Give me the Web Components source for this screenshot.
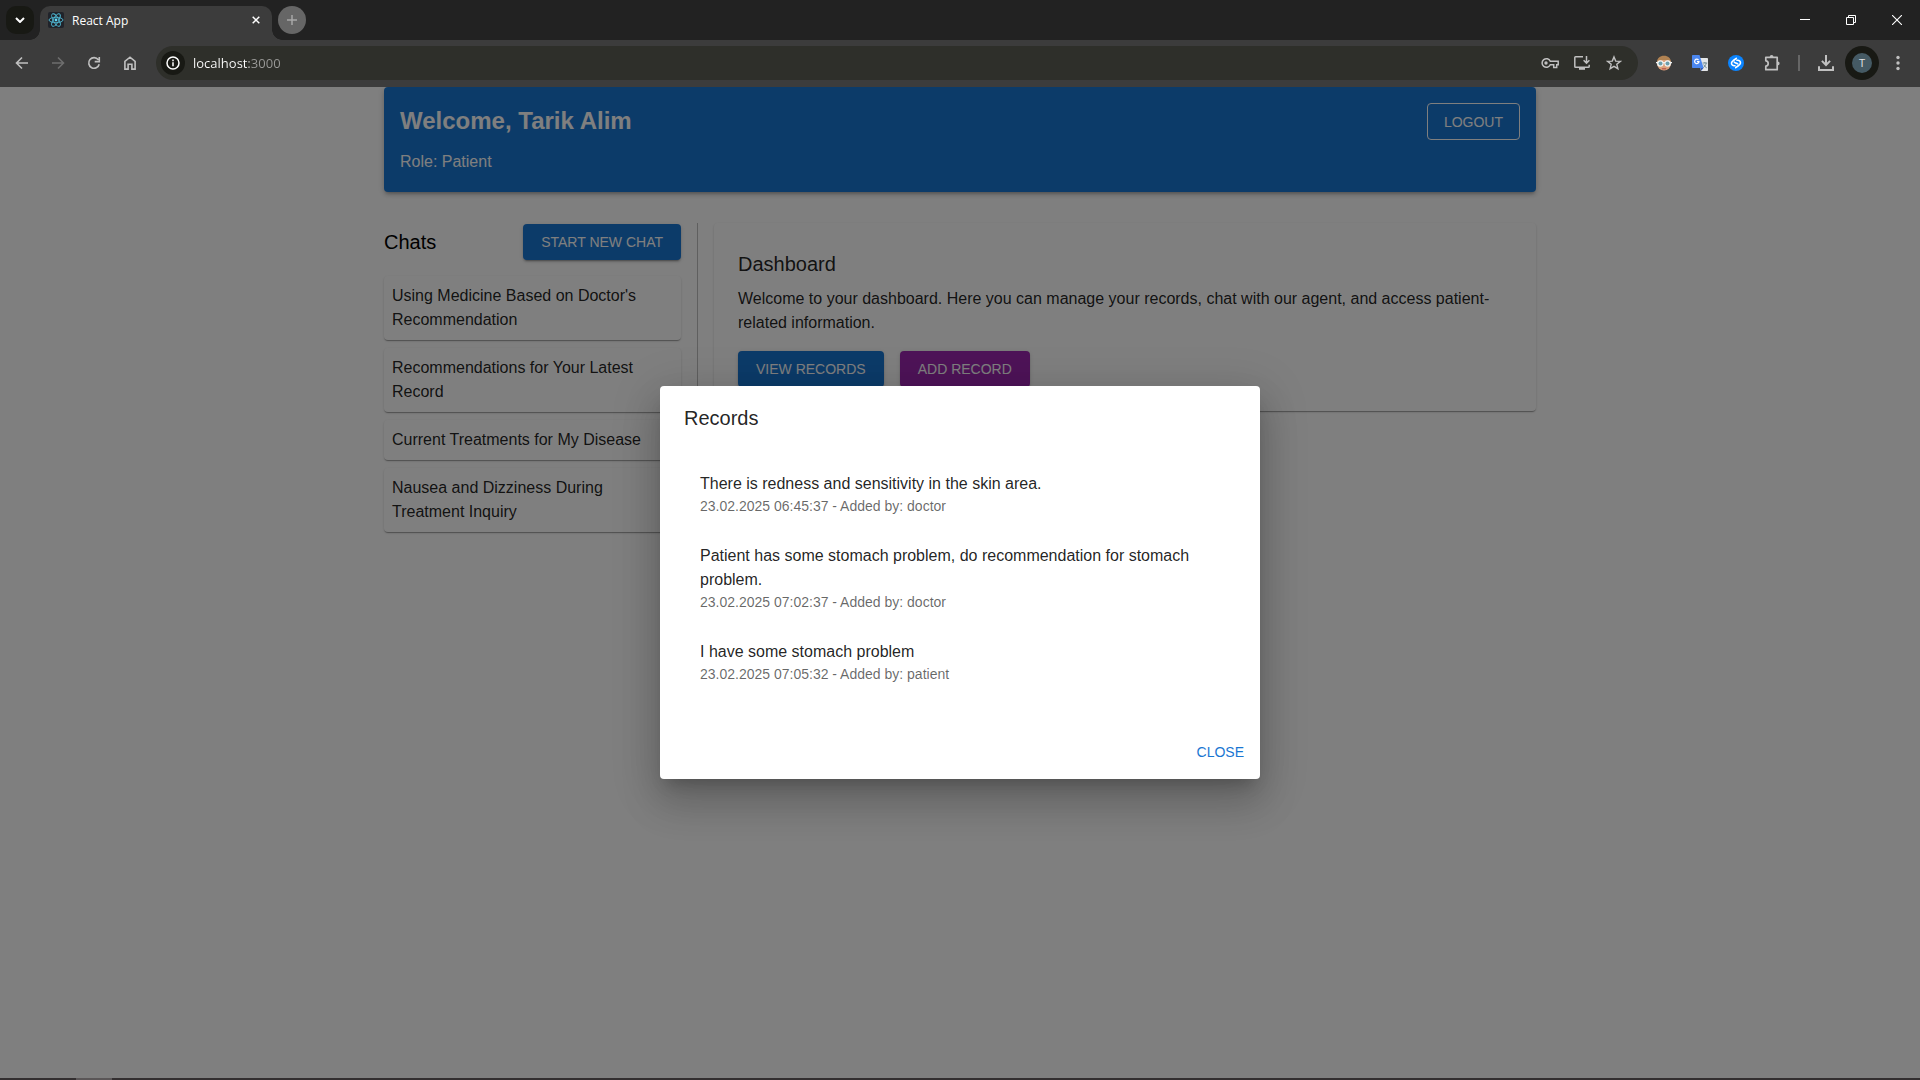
<!DOCTYPE html>
<html lang="en">
<head>
<meta charset="utf-8">
<title>React App</title>
<style>
  html, body { margin: 0; height: 100%; }
  body { font-family: "Liberation Sans", Arial, sans-serif; font-size: 16px; line-height: 24px; color: #000; background: #fff; }
</style>
</head>
<body>
<browser-window>
  <browser-tabs slot="chrome"></browser-tabs>
  <browser-toolbar slot="chrome"></browser-toolbar>
  <patient-page>
    <welcome-header slot="header" name="Tarik Alim" role-name="Patient"></welcome-header>
    <chat-list slot="side">
      <chat-item>Using Medicine Based on Doctor's Recommendation</chat-item>
      <chat-item>Recommendations for Your Latest Record</chat-item>
      <chat-item>Current Treatments for My Disease</chat-item>
      <chat-item>Nausea and Dizziness During Treatment Inquiry</chat-item>
    </chat-list>
    <dashboard-card>Welcome to your dashboard. Here you can manage your records, chat with our agent, and access patient-related information.</dashboard-card>
  </patient-page>
  <records-dialog slot="overlay">
    <record-item><span>There is redness and sensitivity in the skin area.</span><span slot="meta">23.02.2025 06:45:37 - Added by: doctor</span></record-item>
    <record-item><span>Patient has some stomach problem, do recommendation for stomach problem.</span><span slot="meta">23.02.2025 07:02:37 - Added by: doctor</span></record-item>
    <record-item><span>I have some stomach problem</span><span slot="meta">23.02.2025 07:05:32 - Added by: patient</span></record-item>
  </records-dialog>
</browser-window>

<script>
const define = (name, html) => customElements.define(name, class extends HTMLElement {
  constructor() {
    super();
    this.attachShadow({ mode: "open" }).innerHTML =
      html.replace(/\{([\w-]+)\}/g, (m, attr) => this.getAttribute(attr) || "");
  }
});

/* ---------- browser frame ---------- */
define("browser-window", `
<style>
  :host { display: flex; flex-direction: column; height: 100vh; overflow: hidden; }
  .view { flex: 1; position: relative; min-height: 0; overflow: hidden; background: #fff; }
  .task { display: flex; height: 2px; background: #332f30; padding-left: 76px; }
  .task i { width: 36px; background: #5a5657; }
</style>
<slot name="chrome"></slot>
<div class="view"><slot></slot><slot name="overlay"></slot></div>
<div class="task"><i></i></div>`);

define("browser-tabs", `
<style>
  :host { display: flex; height: 40px; background: #222; font-family: "Open Sans", "Noto Sans", sans-serif; font-size: 12px; }
  button { border: 0; padding: 0; margin: 0; background: none; color: #fff; display: grid; place-items: center; }
  svg { display: block; }
  .search { width: 28px; height: 28px; margin: 6px; border-radius: 10px; background: #181914; }
  .tab { display: flex; align-items: center; box-sizing: border-box; width: 232px; height: 34px; margin-top: 6px; padding: 0 8px 6px 8px; gap: 8px; background: #3c3c3c; border-radius: 10px 10px 0 0; color: #fff; position: relative; }
  .tab::before, .tab::after { content: ""; position: absolute; bottom: 0; width: 10px; height: 10px; }
  .tab::before { right: 100%; background: radial-gradient(circle at 0 0, transparent 9.5px, #3c3c3c 10px); }
  .tab::after { left: 100%; background: radial-gradient(circle at 100% 0, transparent 9.5px, #3c3c3c 10px); }
  .tab span { flex: 1; line-height: 16px; padding-top: 2px; }
  .tab button { width: 16px; height: 16px; }
  .new { width: 28px; height: 28px; margin: 6px; border-radius: 50%; background: #666; }
  .win { display: flex; margin-left: auto; }
  .win button { width: 46px; height: 40px; }
</style>
<button class="search" aria-label="Search tabs"><svg width="10" height="6" viewBox="0 0 10 6"><path d="M1 1l4 4 4-4" fill="none" stroke="#fff" stroke-width="2"/></svg></button>
<div class="tab">
  <svg width="16" height="16" viewBox="0 0 16 16"><rect width="16" height="16" rx="2" fill="#20232a"/><g fill="none" stroke="#4fb8d3" stroke-width=".9"><ellipse cx="8" cy="8" rx="7" ry="2.7"/><ellipse cx="8" cy="8" rx="7" ry="2.7" transform="rotate(60 8 8)"/><ellipse cx="8" cy="8" rx="7" ry="2.7" transform="rotate(120 8 8)"/></g><circle cx="8" cy="8" r="1.4" fill="#61dafb"/></svg>
  <span>React App</span>
  <button aria-label="Close tab"><svg width="8" height="8" viewBox="0 0 8 8"><path d="M.7.7l6.6 6.6M7.300.7L.7 7.300" stroke="#fff" stroke-width="1.500"/></svg></button>
</div>
<button class="new" aria-label="New tab"><svg width="10" height="10" viewBox="0 0 10 10"><path d="M5 0v10M0 5h10" stroke="#a8a8a8" stroke-width="1.500"/></svg></button>
<div class="win">
  <button aria-label="Minimize"><svg width="10" height="10" viewBox="0 0 10 10"><path d="M0 4.500h10" stroke="#fff"/></svg></button>
  <button aria-label="Restore"><svg width="10" height="10" viewBox="0 0 10 10"><path d="M.5 2.500h7v7h-7zM2.500 2.500v-2h7v7h-2" fill="none" stroke="#fff"/></svg></button>
  <button aria-label="Close"><svg width="10" height="10" viewBox="0 0 10 10"><path d="M0 0l10 10M10 0L0 10" stroke="#fff" stroke-width="1.100"/></svg></button>
</div>`);

define("browser-toolbar", `
<style>
  :host { display: flex; align-items: center; box-sizing: border-box; height: 47px; padding: 0 10px 1px; gap: 12px; background: #3c3c3c; font-family: "Open Sans", "Noto Sans", sans-serif; font-size: 14px; }
  button { border: 0; padding: 0; margin: 0; background: none; width: 24px; height: 24px; flex: none; display: grid; place-items: center; }
  svg { display: block; fill: none; stroke: #c0c0c0; stroke-width: 1.600; }
  .url { flex: 1; display: flex; align-items: center; gap: 8px; height: 34px; box-sizing: border-box; padding: 0 12px 0 5px; margin: 0 2px; border-radius: 17px; background: #2e2f2a; }
  .info { border-radius: 50%; background: #181914; }
  input { flex: 1; min-width: 0; height: 24px; border: 0; padding: 0; outline: 0; font: 13px/24px "Open Sans", "Noto Sans", sans-serif; color: #fff; -webkit-text-fill-color: transparent; background: linear-gradient(90deg, #fff var(--host-width), #9a9a98 var(--host-width)) text; --host-width: 56px; }
  hr { width: 2px; height: 16px; margin: 0 2px; border: 0; background: #666; }
  .me { width: 34px; height: 34px; margin: 0 -5px; border-radius: 50%; background: #181914; }
  .me b { width: 20px; height: 20px; border-radius: 50%; background: #455a64; color: #e4e4e4; font: 11px/20px "Open Sans", sans-serif; text-align: center; }
</style>
<button aria-label="Back"><svg width="16" height="16" viewBox="0 0 16 16"><path d="M14 8H3M8 2.500L2.500 8 8 13.500"/></svg></button>
<button aria-label="Forward"><svg width="16" height="16" viewBox="0 0 16 16" style="stroke:#6e6e6e"><path d="M2 8h11M8 2.500L13.500 8 8 13.500"/></svg></button>
<button aria-label="Reload"><svg width="16" height="16" viewBox="0 0 16 16"><path d="M13.200 9.200A5.300 5.300 0 1 1 12.300 4.800M13.300 2v4.600H8.700"/></svg></button>
<button aria-label="Home"><svg width="16" height="16" viewBox="0 0 16 16"><path d="M2.900 14.100V6.300L8 2.200l5.100 4.100v7.800H9.900V9.300H6.100v4.800z"/></svg></button>
<div class="url">
  <button class="info" aria-label="Site information"><svg width="14" height="14" viewBox="0 0 14 14" style="stroke:#fff;stroke-width:1.500"><circle cx="7" cy="7" r="6"/><path d="M7 6.200v4M7 3.600v1.600"/></svg></button>
  <input aria-label="Address" value="localhost:3000" spellcheck="false">
  <button aria-label="Passwords"><svg width="18" height="12" viewBox="0 0 18 12" style="stroke-width:1.500"><path d="M9.300 4.200h7.900v3.600h-1.500v2.700h-3V7.800H9.300A4.300 4.300 0 1 1 9.300 4.200z"/><circle cx="5" cy="6" r="1.700" fill="#c0c0c0" stroke="none"/></svg></button>
  <button aria-label="Install"><svg width="16" height="16" viewBox="0 0 16 16" style="stroke-width:1.500"><path d="M9 1.700H1.600a.8.8 0 0 0-.8.800v9a.8.8 0 0 0 .8.800h12.800a.8.8 0 0 0 .8-.8V9.700M12.500 1v7M9.600 5.200l2.900 2.900 2.900-2.900"/><path d="M5 12h6v2.800H5z" fill="#c0c0c0" stroke="none"/></svg></button>
  <button aria-label="Bookmark"><svg width="16" height="16" viewBox="0 0 16 16" style="stroke-width:1.400"><path d="M8 1.900l1.700 4.200 4.600.3-3.500 2.900 1.100 4.400L8 11.300l-3.900 2.400 1.100-4.400-3.500-2.900 4.600-.3z"/></svg></button>
</div>
<button aria-label="Face extension"><svg width="16" height="16" viewBox="0 0 16 16" style="stroke:none"><circle cx="8" cy="8.500" r="7" fill="#dca27c"/><path d="M1 7.500C1 3.200 4 .8 8 .8s7 2.400 7 6.700L12.500 5h-9z" fill="#b08252"/><circle cx="4.300" cy="8.500" r="3.200" fill="#f1f4f4"/><circle cx="11.700" cy="8.500" r="3.200" fill="#f1f4f4"/><path d="M0 7h16v1.300H0z" fill="#f1f4f4"/><circle cx="4.500" cy="8.500" r="2" fill="#6c9eac"/><circle cx="11.500" cy="8.500" r="2" fill="#6c9eac"/><path d="M5.800 13.200h4.400v1.200H5.800z" fill="#b5524a"/></svg></button>
<button aria-label="Translate"><svg width="16" height="16" viewBox="0 0 16 16" style="stroke:none"><path d="M6 3h9.200a.8.8 0 0 1 .8.800v11.400a.8.8 0 0 1-.8.800H9z" fill="#e4e6e8"/><path d="M8.500 12.700L11.500 13 9 16z" fill="#3059b8"/><path d="M.8 0h6.700l4.100 13H.8a.8.8 0 0 1-.8-.8V.8A.8.8 0 0 1 .8 0z" fill="#4b87f0"/><path d="M6.500 5A2.200 2.200 0 1 0 7 6.700H4.900" fill="none" stroke="#fff" stroke-width="1.200"/><path d="M10.600 8h4.600M12.900 7v1M14.200 8c-.3 2-1.400 3.500-3 4.600M11.700 9.500c.6 1.500 1.600 2.600 3 3.300" fill="none" stroke="#66838f" stroke-width=".9"/></svg></button>
<button aria-label="Shazam"><svg width="16" height="16" viewBox="0 0 16 16" style="stroke:#fff;stroke-width:1.600;stroke-linecap:round"><circle cx="8" cy="8" r="8" fill="#0a84ff" stroke="none"/><path d="M7 10.700C5 11.200 3.400 9.800 3.500 8.100 3.600 6.800 4.500 6.200 5.400 5.500L8.300 3.300M9 5.300c2-.5 3.600.9 3.500 2.600-.1 1.300-1 1.900-1.900 2.600L7.700 12.700M6.300 7.200c.7 1.300 2.700.500 3.400 1.700"/></svg></button>
<button aria-label="Extensions"><svg width="18" height="18" viewBox="0 0 18 18" style="stroke-width:1.700"><path d="M2.800 3.300h11.400v12.400H2.800v-3.500c3.200-.2 3.200-5.200 0-5.400z" stroke-linejoin="round"/><path d="M6.700 2.900a1.900 1.900 0 0 1 3.800 0zM14.700 7.500a1.900 1.900 0 0 1 0 3.800z" fill="#c0c0c0" stroke="none"/></svg></button>
<hr>
<button aria-label="Downloads"><svg width="16" height="16" viewBox="0 0 16 16" style="stroke-width:2"><path d="M8 0v9.500M3.900 5.900L8 10l4.100-4.100M1 11.300V15h14v-3.700"/></svg></button>
<button class="me" aria-label="Profile"><b>T</b></button>
<button aria-label="Menu"><svg width="4" height="16" viewBox="0 0 4 16" style="fill:#c0c0c0;stroke:none"><circle cx="2" cy="2.500" r="1.700"/><circle cx="2" cy="8" r="1.700"/><circle cx="2" cy="13.500" r="1.700"/></svg></button>`);

/* ---------- shared button ---------- */
define("ui-button", `
<style>
  :host { display: inline-flex; }
  button { min-height: 36px; padding: 0 18px; border: 0; border-radius: 4px; font: 14px/24px "Liberation Sans", Arial, sans-serif; text-transform: uppercase; white-space: nowrap; color: #fff; background: #1976d2;
    box-shadow: 0 3px 1px -2px rgba(0,0,0,.2), 0 2px 2px 0 rgba(0,0,0,.14), 0 1px 5px 0 rgba(0,0,0,.12); }
  :host([kind="secondary"]) button { background: #9c27b0; }
  :host([kind="outlined"]) button { min-height: 37px; padding: 0 16px; border: 1px solid #fff; background: none; box-shadow: none; }
  :host([kind="text"]) button { padding: 0 8px; color: #1976d2; background: none; box-shadow: none; }
</style>
<button type="button"><slot></slot></button>`);

/* ---------- page ---------- */
define("patient-page", `
<style>
  :host { display: block; box-sizing: border-box; max-width: 1200px; margin: 0 auto; padding: 0 24px; }
  .cols { display: flex; align-items: flex-start; gap: 16px; margin-top: 31px; }
  aside { flex: 0 0 297px; padding: 1px 16px 0 0; border-right: 1px solid rgba(0,0,0,.25); }
  main { flex: 1; min-width: 0; }
</style>
<slot name="header"></slot>
<div class="cols"><aside><slot name="side"></slot></aside><main><slot></slot></main></div>`);

define("welcome-header", `
<style>
  :host { display: block; padding: 16px 16px 18px; border-radius: 4px; color: #fff; background: #1976d2;
    box-shadow: 0 3px 3px -2px rgba(0,0,0,.2), 0 3px 4px 0 rgba(0,0,0,.14), 0 1px 8px 0 rgba(0,0,0,.12); }
  .row { display: flex; justify-content: space-between; align-items: flex-start; margin-bottom: 10px; }
  h1 { margin: 0; font-size: 24px; line-height: 35px; }
  p { margin: 0; }
</style>
<div class="row"><h1>Welcome, {name}</h1><ui-button kind="outlined">Logout</ui-button></div>
<p>Role: {role-name}</p>`);

define("chat-list", `
<style>
  :host { display: block; }
  .head { display: flex; justify-content: space-between; align-items: center; margin-bottom: 16px; }
  h2 { margin: 0; font-size: 20px; line-height: 32px; font-weight: 400; }
  .items { display: flex; flex-direction: column; gap: 8px; }
</style>
<div class="head"><h2>Chats</h2><ui-button>Start New Chat</ui-button></div>
<div class="items"><slot></slot></div>`);

define("chat-item", `
<style>
  :host { display: block; padding: 8px; border-radius: 4px; background: #fff; color: rgba(0,0,0,.87);
    box-shadow: 0 2px 1px -1px rgba(0,0,0,.2), 0 1px 1px 0 rgba(0,0,0,.14), 0 1px 3px 0 rgba(0,0,0,.12); }
</style><slot></slot>`);

define("dashboard-card", `
<style>
  :host { display: block; padding: 25px 24px 24px; border-radius: 4px; background: #fff; color: rgba(0,0,0,.87);
    box-shadow: 0 2px 1px -1px rgba(0,0,0,.2), 0 1px 1px 0 rgba(0,0,0,.14), 0 1px 3px 0 rgba(0,0,0,.12); }
  h2 { margin: 0 0 7px; font-size: 20px; line-height: 32px; font-weight: 400; }
  p { margin: 0 0 16px; }
  .actions { display: flex; gap: 16px; }
</style>
<h2>Dashboard</h2>
<p><slot></slot></p>
<div class="actions"><ui-button>View Records</ui-button><ui-button kind="secondary">Add Record</ui-button></div>`);

/* ---------- modal ---------- */
define("records-dialog", `
<style>
  :host { position: absolute; inset: 0; display: flex; align-items: center; justify-content: center; background: rgba(0,0,0,.5); }
  section { width: 600px; max-width: calc(100% - 64px); border-radius: 4px; background: #fff; color: rgba(0,0,0,.87);
    box-shadow: 0 11px 15px -7px rgba(0,0,0,.2), 0 24px 38px 3px rgba(0,0,0,.14), 0 9px 46px 8px rgba(0,0,0,.12); }
  h2 { margin: 0; padding: 16px 24px; font-size: 20px; line-height: 32px; font-weight: 400; }
  .list { display: flex; flex-direction: column; gap: 28px; padding: 22px 40px 42px; }
  footer { display: flex; justify-content: flex-end; padding: 8px 8px 9px; }
</style>
<section role="dialog" aria-modal="true" aria-labelledby="title">
  <h2 id="title">Records</h2>
  <div class="list"><slot></slot></div>
  <footer><ui-button kind="text">Close</ui-button></footer>
</section>`);

define("record-item", `
<style>
  :host { display: block; }
  .meta { font-size: 14px; line-height: 20px; color: rgba(0,0,0,.6); }
</style>
<div><slot></slot></div><div class="meta"><slot name="meta"></slot></div>`);
</script>
</body>
</html>
